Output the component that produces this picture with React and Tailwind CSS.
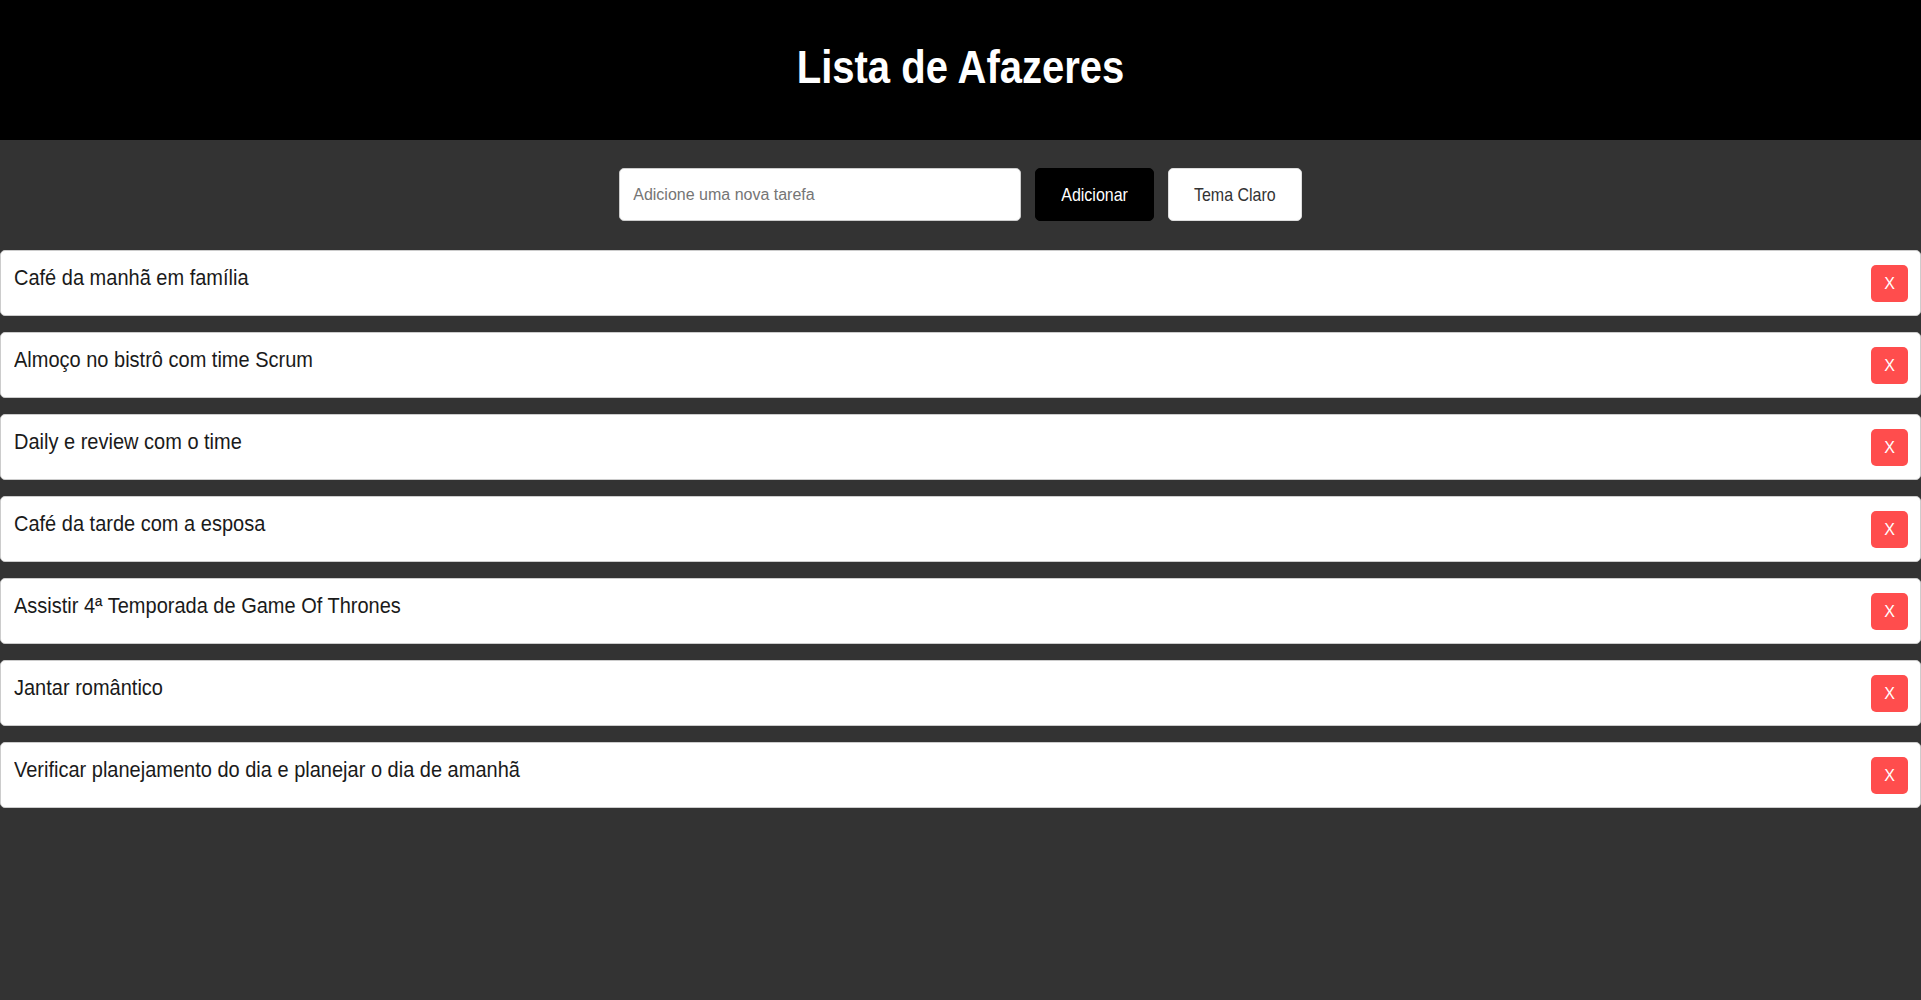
import React, { useState } from 'react';

const initialTasks = [
  'Café da manhã em família',
  'Almoço no bistrô com time Scrum',
  'Daily e review com o time',
  'Café da tarde com a esposa',
  'Assistir 4ª Temporada de Game Of Thrones',
  'Jantar romântico',
  'Verificar planejamento do dia e planejar o dia de amanhã',
];

const App = () => {
  const [tasks, setTasks] = useState(initialTasks);
  const [text, setText] = useState('');

  const addTask = () => {
    if (!text.trim()) return;
    setTasks([...tasks, text.trim()]);
    setText('');
  };

  const removeTask = (index) => {
    setTasks(tasks.filter((_, i) => i !== index));
  };

  return (
    <div className="min-h-screen bg-[#333333] font-['Liberation_Sans',Arial,sans-serif]">
      {/* Header */}
      <header className="h-[140px] bg-black flex items-center justify-center pb-[6px]">
        <h1 className="inline-block scale-y-[1.16] text-[40px] font-bold text-white leading-none">
          Lista de Afazeres
        </h1>
      </header>

      {/* Form */}
      <div className="flex justify-center items-center gap-[14px] pt-[28px] pb-[29px]">
        <input
          type="text"
          value={text}
          onChange={(e) => setText(e.target.value)}
          placeholder="Adicione uma nova tarefa"
          className="w-[402px] h-[53px] px-[13px] rounded-[5px] bg-white border border-[#cccccc] text-[16px] text-[#222] placeholder:text-[#757575] outline-none"
        />
        <button
          onClick={addTask}
          className="h-[53px] px-[25px] rounded-[5px] bg-black border border-black text-white text-[16px]"
        >
          <span className="inline-block scale-y-[1.12]">Adicionar</span>
        </button>
        <button className="h-[53px] px-[25px] rounded-[5px] bg-white border border-[#dddddd] text-[#333] text-[16px]">
          <span className="inline-block scale-y-[1.12]">Tema Claro</span>
        </button>
      </div>

      {/* Task list */}
      <ul className="flex flex-col gap-[16px]">
        {tasks.map((task, i) => (
          <li
            key={i}
            className="flex justify-between bg-white border border-[#cccccc] rounded-[5px] pt-[14px] pb-[13px] pl-[13px] pr-[12px]"
          >
            <span className="inline-block origin-top scale-y-[1.12] text-[20px] text-[#1a1a1a] leading-[23px]">
              {task}
            </span>
            <button
              onClick={() => removeTask(i)}
              className="w-[37px] h-[37px] rounded-[5px] bg-[#ff4d4d] text-white text-[16px] flex items-center justify-center"
            >
              X
            </button>
          </li>
        ))}
      </ul>
    </div>
  );
};

export default App;
